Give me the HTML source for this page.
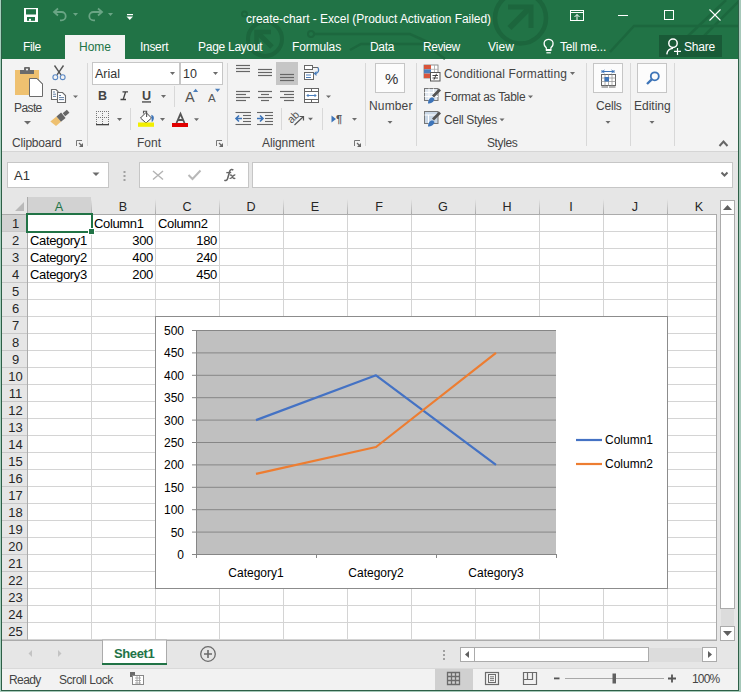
<!DOCTYPE html>
<html><head><meta charset="utf-8"><style>
*{box-sizing:border-box}
html,body{margin:0;padding:0}
body{width:741px;height:692px;position:relative;overflow:hidden;background:#217346;font-family:"Liberation Sans",sans-serif;}
.a{position:absolute}
.t{position:absolute;white-space:nowrap;line-height:1}
svg{position:absolute;overflow:visible}
</style></head><body>
<div class="a" style="left:0px;top:0px;width:741px;height:59px;background:#217346"></div>
<div class="a" style="left:2px;top:59px;width:736px;height:92px;background:#f3f3f3"></div>
<div class="a" style="left:2px;top:151px;width:736px;height:1px;background:#d5d5d5"></div>
<div class="a" style="left:2px;top:152px;width:736px;height:45px;background:#e6e6e6"></div>
<div class="a" style="left:2px;top:197px;width:736px;height:443px;background:#e6e6e6"></div>
<div class="a" style="left:2px;top:640px;width:736px;height:28px;background:#e6e6e6"></div>
<div class="a" style="left:2px;top:668px;width:736px;height:1px;background:#d9d9d9"></div>
<div class="a" style="left:2px;top:669px;width:736px;height:21px;background:#f2f2f2"></div>
<svg style="left:0;top:0" width="741" height="59"><circle cx="520.5" cy="18" r="25.5" fill="none" stroke="#1c663d" stroke-width="4.5"/><path d="M509.5 28 L530 7.5" fill="none" stroke="#1c663d" stroke-width="5.5"/><path d="M508 7 H531 V28" fill="none" stroke="#1c663d" stroke-width="5"/><circle cx="311" cy="34" r="3" fill="none" stroke="#1c663d" stroke-width="2"/><circle cx="265" cy="39" r="17" fill="none" stroke="#1c663d" stroke-width="4"/><path d="M257.5 32.5 L272 47" stroke="#1c663d" stroke-width="5"/><path d="M271 32 H256.5 V46" fill="none" stroke="#1c663d" stroke-width="4.5"/><circle cx="244.5" cy="14" r="2.5" fill="none" stroke="#1c663d" stroke-width="2"/><path d="M610 52 L634 26 H741 M688 36 L726 0 M704 36 L741 -1 M314 34 H410 L450 52 M350 50 L361 44 H425 L445 59" fill="none" stroke="#1c663d" stroke-width="2.5" opacity="0.9"/><path d="M24 8 H38 V22 H24 Z" fill="#fff"/><rect x="26" y="9.2" width="10" height="5.3" fill="#217346"/><rect x="27" y="17" width="8" height="3.8" fill="#217346"/><rect x="29" y="18.8" width="2" height="2" fill="#fff"/><path d="M58 8.5 L54 12 L58 15.5 M54.5 12 H61.5 A4.2 4.2 0 0 1 61.5 20.4 H60" fill="none" stroke="#6aa585" stroke-width="1.8"/><path d="M73 13 H78 L75.5 16 Z" fill="#6aa585"/><path d="M98 8.5 L102 12 L98 15.5 M101.5 12 H93.5 A4.2 4.2 0 0 0 93.5 20.4 H95" fill="none" stroke="#6aa585" stroke-width="1.8"/><path d="M108 13 H113 L110.5 16 Z" fill="#6aa585"/><rect x="127" y="14" width="6" height="1.2" fill="#fff"/><path d="M126.5 16.5 H133 L129.75 20 Z" fill="#fff"/><rect x="570.5" y="10.5" width="13" height="10" fill="none" stroke="#fff" stroke-width="1"/><line x1="570.5" y1="12.5" x2="583.5" y2="12.5" stroke="#fff" stroke-width="1"/><path d="M577 20.5 V14.5 M574.5 17 L577 14.5 L579.5 17" fill="none" stroke="#fff" stroke-width="1"/><line x1="618" y1="15.5" x2="628" y2="15.5" stroke="#fff" stroke-width="1"/><rect x="664.5" y="10.5" width="9" height="9" fill="none" stroke="#fff" stroke-width="1"/><path d="M709.5 9.5 L720.5 20.5 M720.5 9.5 L709.5 20.5" stroke="#fff" stroke-width="1.1"/><rect x="659" y="35" width="63" height="22" fill="#195a37"/><circle cx="673" cy="43.3" r="4.2" fill="none" stroke="#fff" stroke-width="1.5"/><path d="M666.8 54.3 C667.2 50.8 669.5 48.6 673 48.4" fill="none" stroke="#fff" stroke-width="1.4"/><path d="M674 51.4 H681 M677.5 48 V55" stroke="#fff" stroke-width="1.2"/><path d="M546.3 47.8 C544.2 46 543.9 44 544.2 42.5 C544.8 40.2 546.5 39.3 548.6 39.3 C550.7 39.3 552.4 40.2 553 42.5 C553.3 44 553 46 550.9 47.8 V50.2 H546.3 Z" fill="none" stroke="#fff" stroke-width="1.2"/><rect x="546" y="49" width="5.2" height="2" fill="#fff"/><path d="M546.4 52.8 H550.8" stroke="#fff" stroke-width="1.2"/><rect x="65" y="35" width="60" height="24" fill="#f3f3f3"/></svg>
<div class="t" style="left:246px;top:13px;font-size:12px;color:#fff;letter-spacing:-0.05px">create-chart - Excel (Product Activation Failed)</div>
<div class="t" style="left:23px;top:41px;font-size:12px;color:#fff;letter-spacing:-0.4px">File</div>
<div class="t" style="left:79px;top:41px;font-size:12px;color:#217346">Home</div>
<div class="t" style="left:140px;top:41px;font-size:12px;color:#fff;letter-spacing:-0.3px">Insert</div>
<div class="t" style="left:198px;top:41px;font-size:12px;color:#fff;letter-spacing:-0.27px">Page Layout</div>
<div class="t" style="left:292px;top:41px;font-size:12px;color:#fff;letter-spacing:-0.12px">Formulas</div>
<div class="t" style="left:370px;top:41px;font-size:12px;color:#fff;letter-spacing:-0.3px">Data</div>
<div class="t" style="left:423px;top:41px;font-size:12px;color:#fff;letter-spacing:-0.45px">Review</div>
<div class="t" style="left:488px;top:41px;font-size:12px;color:#fff">View</div>
<div class="t" style="left:560px;top:41px;font-size:12px;color:#fff;letter-spacing:-0.2px">Tell me...</div>
<div class="t" style="left:684px;top:41px;font-size:12px;color:#fff;letter-spacing:-0.2px">Share</div>
<svg style="left:0;top:0" width="741" height="160"><rect x="87" y="63" width="1" height="83" fill="#d8d8d8"/><rect x="227" y="63" width="1" height="83" fill="#d8d8d8"/><rect x="365" y="63" width="1" height="83" fill="#d8d8d8"/><rect x="416" y="63" width="1" height="83" fill="#d8d8d8"/><rect x="586" y="63" width="1" height="83" fill="#d8d8d8"/><rect x="630" y="63" width="1" height="83" fill="#d8d8d8"/><rect x="674" y="63" width="1" height="83" fill="#d8d8d8"/><rect x="15" y="70" width="24" height="25" fill="#efc170"/><rect x="20" y="70" width="14" height="4" fill="#6b6b6b"/><rect x="24" y="67" width="6" height="4" rx="1" fill="#6b6b6b"/><circle cx="27" cy="69.5" r="1" fill="#fff"/><path d="M29.5 78.5 H37 L42.5 84 V96.5 H29.5 Z" fill="#fff" stroke="#6b6b6b" stroke-width="1"/><path d="M37 78.5 L42.5 84" stroke="#6b6b6b" stroke-width="1"/><path d="M24 121 H31 L27.5 124.5 Z" fill="#6b6b6b"/><path d="M54.5 65.5 L61 74.8 M63.5 65.5 L57 74.8" stroke="#555" stroke-width="1.4"/><circle cx="55.3" cy="77.2" r="2.4" fill="none" stroke="#5a88c4" stroke-width="1.1"/><circle cx="62.7" cy="77.2" r="2.4" fill="none" stroke="#5a88c4" stroke-width="1.1"/><path d="M51.5 89.5 H56 L58 91.5 V99.5 H51.5 Z" fill="#fff" stroke="#6b6b6b" stroke-width="1.1"/><path d="M53 92 H55 M53 94.2 H56 M53 96.4 H56" stroke="#4f6f98" stroke-width="0.9"/><path d="M57.5 92.5 H62.5 L65.5 95.5 V102.5 H57.5 Z" fill="#fff" stroke="#6b6b6b" stroke-width="1.1"/><path d="M59 95.5 H61 M59 97.6 H64 M59 99.6 H64" stroke="#4f6f98" stroke-width="0.9"/><path d="M73 95.5 H78 L75.5 98 Z" fill="#6b6b6b"/><g transform="translate(59.5 118.5) rotate(-40)"><path d="M-9 -3.5 H-1 V3.5 H-7.5 Z" fill="#eec070"/><rect x="-1" y="-3.5" width="6" height="7" fill="#666"/><rect x="5.8" y="-2" width="5.5" height="4" fill="#666"/></g><rect x="92.5" y="62.5" width="87" height="22" fill="#fff" stroke="#c6c6c6"/><rect x="180.5" y="62.5" width="42" height="22" fill="#fff" stroke="#c6c6c6"/><path d="M170 72 H175 L172.5 75 Z" fill="#6b6b6b"/><path d="M213 72 H218 L215.5 75 Z" fill="#6b6b6b"/><path d="M161 95 H166 L163.5 98 Z" fill="#6b6b6b"/><rect x="142" y="101.3" width="9" height="1.3" fill="#444"/><rect x="174" y="86" width="1" height="21" fill="#d8d8d8"/><path d="M193 92 L195.6 88.8 L198.2 92 Z" fill="#4a7ebb"/><path d="M215 88.8 H220.2 L217.6 92 Z" fill="#4a7ebb"/><g fill="#777"><rect x="96" y="111" width="1" height="1"/><rect x="98" y="111" width="1" height="1"/><rect x="100" y="111" width="1" height="1"/><rect x="102" y="111" width="1" height="1"/><rect x="104" y="111" width="1" height="1"/><rect x="106" y="111" width="1" height="1"/><rect x="108" y="111" width="1" height="1"/><rect x="96" y="117" width="1" height="1"/><rect x="98" y="117" width="1" height="1"/><rect x="100" y="117" width="1" height="1"/><rect x="102" y="117" width="1" height="1"/><rect x="104" y="117" width="1" height="1"/><rect x="106" y="117" width="1" height="1"/><rect x="108" y="117" width="1" height="1"/><rect x="96" y="111" width="1" height="1"/><rect x="96" y="113" width="1" height="1"/><rect x="96" y="115" width="1" height="1"/><rect x="96" y="117" width="1" height="1"/><rect x="96" y="119" width="1" height="1"/><rect x="96" y="121" width="1" height="1"/><rect x="96" y="123" width="1" height="1"/><rect x="102" y="111" width="1" height="1"/><rect x="102" y="113" width="1" height="1"/><rect x="102" y="115" width="1" height="1"/><rect x="102" y="117" width="1" height="1"/><rect x="102" y="119" width="1" height="1"/><rect x="102" y="121" width="1" height="1"/><rect x="102" y="123" width="1" height="1"/><rect x="108" y="111" width="1" height="1"/><rect x="108" y="113" width="1" height="1"/><rect x="108" y="115" width="1" height="1"/><rect x="108" y="117" width="1" height="1"/><rect x="108" y="119" width="1" height="1"/><rect x="108" y="121" width="1" height="1"/><rect x="108" y="123" width="1" height="1"/></g><rect x="96" y="124" width="13" height="1.3" fill="#444"/><path d="M117 118 H122 L119.5 121 Z" fill="#6b6b6b"/><rect x="130" y="108" width="1" height="22" fill="#d8d8d8"/><path d="M140.5 118 L146 112.5 L151.5 118 L146 123 Z" fill="#fff" stroke="#444" stroke-width="1"/><path d="M143.5 113.5 V111.2 H146.6 V117" fill="none" stroke="#555" stroke-width="1.1"/><path d="M151.3 114.8 C154.2 115.6 155 119 151.8 122.3 Z" fill="#3d74b8"/><rect x="138" y="122.5" width="16" height="4.3" fill="#f2ef00"/><path d="M160 118 H165 L162.5 121 Z" fill="#6b6b6b"/><path d="M176.5 123 L180.5 113.8 L184.5 123 M178 120 H183" fill="none" stroke="#555" stroke-width="1.8"/><rect x="172" y="123" width="16" height="4" fill="#e00000"/><path d="M194 118.2 H199 L196.5 121 Z" fill="#6b6b6b"/><path d="M216.5 146 V140.5 H222" fill="none" stroke="#777" stroke-width="1"/><path d="M223 143 V147 H219 Z" fill="#666"/><path d="M219 143 L222 146" stroke="#666" stroke-width="1.2"/><line x1="236" y1="65.5" x2="250" y2="65.5" stroke="#666" stroke-width="1.2"/><line x1="236" y1="68.5" x2="250" y2="68.5" stroke="#666" stroke-width="1.2"/><line x1="236" y1="71.5" x2="250" y2="71.5" stroke="#666" stroke-width="1.2"/><line x1="258" y1="69.5" x2="272" y2="69.5" stroke="#666" stroke-width="1.2"/><line x1="258" y1="72.5" x2="272" y2="72.5" stroke="#666" stroke-width="1.2"/><line x1="258" y1="75.5" x2="272" y2="75.5" stroke="#666" stroke-width="1.2"/><rect x="276" y="62" width="22" height="23" fill="#c6c6c6"/><line x1="280" y1="74.5" x2="294" y2="74.5" stroke="#666" stroke-width="1.2"/><line x1="280" y1="77.5" x2="294" y2="77.5" stroke="#666" stroke-width="1.2"/><line x1="280" y1="80.5" x2="294" y2="80.5" stroke="#666" stroke-width="1.2"/><rect x="304.5" y="65.5" width="8" height="4" fill="#fff" stroke="#666"/><line x1="312.5" y1="67.5" x2="318" y2="67.5" stroke="#666" stroke-width="1"/><rect x="304.5" y="72.5" width="9" height="7" fill="#fff" stroke="#666"/><line x1="306" y1="75" x2="311" y2="75" stroke="#4a7ebb" stroke-width="1"/><line x1="306" y1="77.5" x2="311" y2="77.5" stroke="#4a7ebb" stroke-width="1"/><path d="M318 67.5 C319.5 71 318 73.5 315 73.5" fill="none" stroke="#4a7ebb" stroke-width="1.3"/><path d="M313.5 73.5 L316.5 71 L316.5 76 Z" fill="#4a7ebb"/><line x1="236" y1="91.5" x2="250" y2="91.5" stroke="#666" stroke-width="1.2"/><line x1="258" y1="91.5" x2="272" y2="91.5" stroke="#666" stroke-width="1.2"/><line x1="280" y1="91.5" x2="294" y2="91.5" stroke="#666" stroke-width="1.2"/><line x1="236" y1="94.5" x2="246" y2="94.5" stroke="#666" stroke-width="1.2"/><line x1="261" y1="94.5" x2="269" y2="94.5" stroke="#666" stroke-width="1.2"/><line x1="284" y1="94.5" x2="294" y2="94.5" stroke="#666" stroke-width="1.2"/><line x1="236" y1="97.5" x2="250" y2="97.5" stroke="#666" stroke-width="1.2"/><line x1="258" y1="97.5" x2="272" y2="97.5" stroke="#666" stroke-width="1.2"/><line x1="280" y1="97.5" x2="294" y2="97.5" stroke="#666" stroke-width="1.2"/><line x1="236" y1="100.5" x2="246" y2="100.5" stroke="#666" stroke-width="1.2"/><line x1="261" y1="100.5" x2="269" y2="100.5" stroke="#666" stroke-width="1.2"/><line x1="284" y1="100.5" x2="294" y2="100.5" stroke="#666" stroke-width="1.2"/><rect x="304.5" y="88.5" width="14" height="14" fill="#fff" stroke="#666"/><line x1="304.5" y1="91.5" x2="318.5" y2="91.5" stroke="#666" stroke-width="1"/><line x1="304.5" y1="99.5" x2="318.5" y2="99.5" stroke="#666" stroke-width="1"/><line x1="311.5" y1="88.5" x2="311.5" y2="91.5" stroke="#666"/><line x1="311.5" y1="99.5" x2="311.5" y2="102.5" stroke="#666"/><path d="M307 95.5 H316 M308.5 94 L307 95.5 L308.5 97 M314.5 94 L316 95.5 L314.5 97" fill="none" stroke="#4a7ebb" stroke-width="1"/><path d="M326 95.5 H331 L328.5 98 Z" fill="#6b6b6b"/><line x1="235.5" y1="112.5" x2="251" y2="112.5" stroke="#666" stroke-width="1.1"/><line x1="257" y1="112.5" x2="273" y2="112.5" stroke="#666" stroke-width="1.1"/><line x1="243" y1="115.5" x2="251" y2="115.5" stroke="#666" stroke-width="1.1"/><line x1="265" y1="115.5" x2="273" y2="115.5" stroke="#666" stroke-width="1.1"/><line x1="243" y1="118.5" x2="251" y2="118.5" stroke="#666" stroke-width="1.1"/><line x1="265" y1="118.5" x2="273" y2="118.5" stroke="#666" stroke-width="1.1"/><line x1="243" y1="121.5" x2="251" y2="121.5" stroke="#666" stroke-width="1.1"/><line x1="265" y1="121.5" x2="273" y2="121.5" stroke="#666" stroke-width="1.1"/><line x1="235.5" y1="124.5" x2="251" y2="124.5" stroke="#666" stroke-width="1.1"/><line x1="257" y1="124.5" x2="273" y2="124.5" stroke="#666" stroke-width="1.1"/><path d="M236 118.5 H242 M239 115.5 L236 118.5 L239 121.5" fill="none" stroke="#3d74b8" stroke-width="1.6"/><path d="M257 118.5 H263 M260 115.5 L263 118.5 L260 121.5" fill="none" stroke="#3d74b8" stroke-width="1.6"/><rect x="281" y="108" width="1" height="22" fill="#d8d8d8"/><rect x="322" y="108" width="1" height="22" fill="#d8d8d8"/><text x="0" y="0" transform="translate(291.5,124) rotate(-45)" font-family="Liberation Sans" font-size="11" fill="#555">ab</text><path d="M294.5 125 L303.5 116.5 M299.5 116.5 H303.5 V120.5" fill="none" stroke="#555" stroke-width="1.2"/><path d="M308 117.8 H313 L310.5 120.5 Z" fill="#6b6b6b"/><path d="M331.5 115.5 L336 119 L331.5 122.5 Z" fill="#3d74b8"/><text x="336" y="123" font-family="Liberation Sans" font-size="11" font-weight="bold" fill="#555">&#182;</text><path d="M352 118 H357 L354.5 120.7 Z" fill="#6b6b6b"/><path d="M354.5 146 V140.5 H360" fill="none" stroke="#777" stroke-width="1"/><path d="M361 143 V147 H357 Z" fill="#666"/><path d="M357 143 L360 146" stroke="#666" stroke-width="1.2"/><path d="M76.5 146 V140.5 H82" fill="none" stroke="#777" stroke-width="1"/><path d="M83 143 V147 H79 Z" fill="#666"/><path d="M79 143 L82 146" stroke="#666" stroke-width="1.2"/><rect x="375.5" y="63.5" width="29" height="29" fill="#fcfcfc" stroke="#c6c6c6"/><path d="M387.5 121 H392.5 L390 123.7 Z" fill="#6b6b6b"/><rect x="424" y="65" width="14" height="13" fill="#fff" stroke="#777" stroke-width="0.8"/><rect x="424" y="65" width="7" height="4.3" fill="#d9553a"/><rect x="424" y="69.3" width="7" height="4.3" fill="#4a7ebb"/><rect x="424" y="73.6" width="7" height="4.4" fill="#d9553a"/><path d="M431 69.3 H438 M431 73.6 H438 M434.5 65 V78" stroke="#aaa" stroke-width="0.8"/><rect x="430.5" y="72.5" width="9.5" height="8.5" fill="#fff" stroke="#555" stroke-width="1"/><path d="M432.5 75.5 H438 M432.5 78 H438 M436.5 73.8 L434 79.7" stroke="#333" stroke-width="0.9"/><rect x="424.5" y="88.5" width="13.5" height="12" fill="#dfe6ee" stroke="#777" stroke-width="1"/><path d="M424.5 92.5 H438 M424.5 96.5 H438 M429 88.5 V100.5 M433.5 88.5 V100.5" stroke="#fff" stroke-width="1"/><path d="M433 96.5 L440 89.5" stroke="#555" stroke-width="2.8"/><path d="M428 103.5 C428 99.5 430 97.0 433 97.5 L434.5 99.0 C433.5 102.5 431 103.5 428 103.5 Z" fill="#3d74b8"/><rect x="424.5" y="111.5" width="13.5" height="12" fill="#c9d7e6" stroke="#777" stroke-width="1"/><path d="M424.5 115.0 H438 M428.5 115.0 V123.5" stroke="#fff" stroke-width="1"/><path d="M433 119.5 L440 112.5" stroke="#555" stroke-width="2.8"/><path d="M428 126.5 C428 122.5 430 120.0 433 120.5 L434.5 122.0 C433.5 125.5 431 126.5 428 126.5 Z" fill="#3d74b8"/><path d="M570 72 H575 L572.5 75 Z" fill="#6b6b6b"/><path d="M528 95.5 H533 L530.5 98.3 Z" fill="#6b6b6b"/><path d="M499.5 118.5 H504.5 L502 121.3 Z" fill="#6b6b6b"/><rect x="593.5" y="63.5" width="29" height="29" fill="#fcfcfc" stroke="#c6c6c6"/><rect x="601.5" y="74.5" width="14" height="11" fill="#fff" stroke="#666" stroke-width="1"/><path d="M601.5 78 H615.5 M601.5 81.5 H615.5 M605 74.5 V85.5 M608.5 74.5 V85.5 M612 74.5 V85.5" stroke="#999" stroke-width="0.8"/><rect x="604.5" y="77" width="4.5" height="4.5" fill="#3d74b8"/><path d="M602 71.5 H614 M602 70 V73 M614 70 V73 M604.5 70 L602.5 71.5 L604.5 73 M611.5 70 L613.5 71.5 L611.5 73" fill="none" stroke="#3d74b8" stroke-width="1"/><path d="M601.5 87 H608 M609 87 H615.5" stroke="#666" stroke-width="1"/><path d="M605.5 121 H610.5 L608 123.7 Z" fill="#6b6b6b"/><rect x="637.5" y="63.5" width="29" height="29" fill="#fcfcfc" stroke="#c6c6c6"/><circle cx="654.8" cy="76.3" r="4" fill="none" stroke="#3d74b8" stroke-width="1.8"/><path d="M651.8 79.3 L647 84" stroke="#3d74b8" stroke-width="2.4"/><path d="M649.5 121 H654.5 L652 123.7 Z" fill="#6b6b6b"/><path d="M719.5 146 L723.5 141.5 L727.5 146" fill="none" stroke="#666" stroke-width="2"/></svg>
<div class="t" style="left:14px;top:102px;font-size:12px;color:#444;letter-spacing:-0.6px">Paste</div>
<div class="t" style="left:12px;top:137px;font-size:12px;color:#444;letter-spacing:-0.2px">Clipboard</div>
<div class="t" style="left:137px;top:137px;font-size:12px;color:#444">Font</div>
<div class="t" style="left:262px;top:137px;font-size:12px;color:#444;letter-spacing:-0.1px">Alignment</div>
<div class="t" style="left:487px;top:137px;font-size:12px;color:#444;letter-spacing:-0.4px">Styles</div>
<div class="t" style="left:369px;top:100px;font-size:12px;color:#444;letter-spacing:0.15px">Number</div>
<div class="t" style="left:596px;top:100px;font-size:12px;color:#444;letter-spacing:-0.2px">Cells</div>
<div class="t" style="left:634px;top:100px;font-size:12px;color:#444">Editing</div>
<div class="t" style="left:385px;top:71px;font-size:15px;color:#333">%</div>
<div class="t" style="left:444px;top:68px;font-size:12px;color:#444;letter-spacing:0.1px">Conditional Formatting</div>
<div class="t" style="left:444px;top:91px;font-size:12px;color:#444;letter-spacing:-0.3px">Format as Table</div>
<div class="t" style="left:444px;top:114px;font-size:12px;color:#444;letter-spacing:-0.35px">Cell Styles</div>
<div class="t" style="left:95px;top:68px;font-size:12.5px;color:#333">Arial</div>
<div class="t" style="left:183px;top:68px;font-size:12.5px;color:#333">10</div>
<div class="t" style="left:98px;top:90px;font-size:12.5px;font-weight:bold;color:#444">B</div>
<svg style="left:0;top:0" width="300" height="150"><path d="M122.5 91.8 H128 M120.5 99.5 H126 M125.6 91.8 L123.2 99.5" fill="none" stroke="#444" stroke-width="1.3"/></svg>
<div class="t" style="left:142px;top:90px;font-size:12.5px;font-weight:bold;color:#444">U</div>
<div class="t" style="left:185px;top:89.5px;font-size:14.5px;color:#555">A</div>
<div class="t" style="left:208px;top:92.5px;font-size:11.5px;color:#555">A</div>
<div class="a" style="left:28px;top:215px;width:688px;height:425px;background:#fff"></div>
<div class="a" style="left:2px;top:197px;width:714px;height:17px;background:#e6e6e6"></div>
<div class="a" style="left:2px;top:214px;width:25px;height:426px;background:#e6e6e6"></div>
<div class="a" style="left:91px;top:215px;width:1px;height:425px;background:#d4d4d4"></div>
<div class="a" style="left:155px;top:215px;width:1px;height:425px;background:#d4d4d4"></div>
<div class="a" style="left:219px;top:215px;width:1px;height:425px;background:#d4d4d4"></div>
<div class="a" style="left:283px;top:215px;width:1px;height:425px;background:#d4d4d4"></div>
<div class="a" style="left:347px;top:215px;width:1px;height:425px;background:#d4d4d4"></div>
<div class="a" style="left:411px;top:215px;width:1px;height:425px;background:#d4d4d4"></div>
<div class="a" style="left:475px;top:215px;width:1px;height:425px;background:#d4d4d4"></div>
<div class="a" style="left:539px;top:215px;width:1px;height:425px;background:#d4d4d4"></div>
<div class="a" style="left:603px;top:215px;width:1px;height:425px;background:#d4d4d4"></div>
<div class="a" style="left:667px;top:215px;width:1px;height:425px;background:#d4d4d4"></div>
<div class="a" style="left:28px;top:231px;width:688px;height:1px;background:#d4d4d4"></div>
<div class="a" style="left:28px;top:248px;width:688px;height:1px;background:#d4d4d4"></div>
<div class="a" style="left:28px;top:265px;width:688px;height:1px;background:#d4d4d4"></div>
<div class="a" style="left:28px;top:282px;width:688px;height:1px;background:#d4d4d4"></div>
<div class="a" style="left:28px;top:299px;width:688px;height:1px;background:#d4d4d4"></div>
<div class="a" style="left:28px;top:316px;width:688px;height:1px;background:#d4d4d4"></div>
<div class="a" style="left:28px;top:333px;width:688px;height:1px;background:#d4d4d4"></div>
<div class="a" style="left:28px;top:350px;width:688px;height:1px;background:#d4d4d4"></div>
<div class="a" style="left:28px;top:367px;width:688px;height:1px;background:#d4d4d4"></div>
<div class="a" style="left:28px;top:384px;width:688px;height:1px;background:#d4d4d4"></div>
<div class="a" style="left:28px;top:401px;width:688px;height:1px;background:#d4d4d4"></div>
<div class="a" style="left:28px;top:418px;width:688px;height:1px;background:#d4d4d4"></div>
<div class="a" style="left:28px;top:435px;width:688px;height:1px;background:#d4d4d4"></div>
<div class="a" style="left:28px;top:452px;width:688px;height:1px;background:#d4d4d4"></div>
<div class="a" style="left:28px;top:469px;width:688px;height:1px;background:#d4d4d4"></div>
<div class="a" style="left:28px;top:486px;width:688px;height:1px;background:#d4d4d4"></div>
<div class="a" style="left:28px;top:503px;width:688px;height:1px;background:#d4d4d4"></div>
<div class="a" style="left:28px;top:520px;width:688px;height:1px;background:#d4d4d4"></div>
<div class="a" style="left:28px;top:537px;width:688px;height:1px;background:#d4d4d4"></div>
<div class="a" style="left:28px;top:554px;width:688px;height:1px;background:#d4d4d4"></div>
<div class="a" style="left:28px;top:571px;width:688px;height:1px;background:#d4d4d4"></div>
<div class="a" style="left:28px;top:588px;width:688px;height:1px;background:#d4d4d4"></div>
<div class="a" style="left:28px;top:605px;width:688px;height:1px;background:#d4d4d4"></div>
<div class="a" style="left:28px;top:622px;width:688px;height:1px;background:#d4d4d4"></div>
<div class="a" style="left:28px;top:639px;width:688px;height:1px;background:#d4d4d4"></div>
<div class="a" style="left:2px;top:214px;width:714px;height:1px;background:#ababab"></div>
<div class="a" style="left:27px;top:197px;width:1px;height:443px;background:#ababab"></div>
<div class="a" style="left:91px;top:199px;width:1px;height:15px;background:linear-gradient(#e6e6e6,#ababab)"></div>
<div class="a" style="left:155px;top:199px;width:1px;height:15px;background:linear-gradient(#e6e6e6,#ababab)"></div>
<div class="a" style="left:219px;top:199px;width:1px;height:15px;background:linear-gradient(#e6e6e6,#ababab)"></div>
<div class="a" style="left:283px;top:199px;width:1px;height:15px;background:linear-gradient(#e6e6e6,#ababab)"></div>
<div class="a" style="left:347px;top:199px;width:1px;height:15px;background:linear-gradient(#e6e6e6,#ababab)"></div>
<div class="a" style="left:411px;top:199px;width:1px;height:15px;background:linear-gradient(#e6e6e6,#ababab)"></div>
<div class="a" style="left:475px;top:199px;width:1px;height:15px;background:linear-gradient(#e6e6e6,#ababab)"></div>
<div class="a" style="left:539px;top:199px;width:1px;height:15px;background:linear-gradient(#e6e6e6,#ababab)"></div>
<div class="a" style="left:603px;top:199px;width:1px;height:15px;background:linear-gradient(#e6e6e6,#ababab)"></div>
<div class="a" style="left:667px;top:199px;width:1px;height:15px;background:linear-gradient(#e6e6e6,#ababab)"></div>
<div class="a" style="left:2px;top:231px;width:25px;height:1px;background:#c8c8c8"></div>
<div class="a" style="left:2px;top:248px;width:25px;height:1px;background:#c8c8c8"></div>
<div class="a" style="left:2px;top:265px;width:25px;height:1px;background:#c8c8c8"></div>
<div class="a" style="left:2px;top:282px;width:25px;height:1px;background:#c8c8c8"></div>
<div class="a" style="left:2px;top:299px;width:25px;height:1px;background:#c8c8c8"></div>
<div class="a" style="left:2px;top:316px;width:25px;height:1px;background:#c8c8c8"></div>
<div class="a" style="left:2px;top:333px;width:25px;height:1px;background:#c8c8c8"></div>
<div class="a" style="left:2px;top:350px;width:25px;height:1px;background:#c8c8c8"></div>
<div class="a" style="left:2px;top:367px;width:25px;height:1px;background:#c8c8c8"></div>
<div class="a" style="left:2px;top:384px;width:25px;height:1px;background:#c8c8c8"></div>
<div class="a" style="left:2px;top:401px;width:25px;height:1px;background:#c8c8c8"></div>
<div class="a" style="left:2px;top:418px;width:25px;height:1px;background:#c8c8c8"></div>
<div class="a" style="left:2px;top:435px;width:25px;height:1px;background:#c8c8c8"></div>
<div class="a" style="left:2px;top:452px;width:25px;height:1px;background:#c8c8c8"></div>
<div class="a" style="left:2px;top:469px;width:25px;height:1px;background:#c8c8c8"></div>
<div class="a" style="left:2px;top:486px;width:25px;height:1px;background:#c8c8c8"></div>
<div class="a" style="left:2px;top:503px;width:25px;height:1px;background:#c8c8c8"></div>
<div class="a" style="left:2px;top:520px;width:25px;height:1px;background:#c8c8c8"></div>
<div class="a" style="left:2px;top:537px;width:25px;height:1px;background:#c8c8c8"></div>
<div class="a" style="left:2px;top:554px;width:25px;height:1px;background:#c8c8c8"></div>
<div class="a" style="left:2px;top:571px;width:25px;height:1px;background:#c8c8c8"></div>
<div class="a" style="left:2px;top:588px;width:25px;height:1px;background:#c8c8c8"></div>
<div class="a" style="left:2px;top:605px;width:25px;height:1px;background:#c8c8c8"></div>
<div class="a" style="left:2px;top:622px;width:25px;height:1px;background:#c8c8c8"></div>
<div class="a" style="left:2px;top:639px;width:25px;height:1px;background:#c8c8c8"></div>
<div class="a" style="left:28px;top:197px;width:63px;height:17px;background:#d2d2d2"></div>
<div class="a" style="left:2px;top:215px;width:25px;height:16px;background:#d2d2d2"></div>
<svg style="left:0;top:0" width="40" height="220"><path d="M24 202 L24 211 L15 211 Z" fill="#b9b9b9"/></svg>
<div class="t" style="left:39.0px;width:40px;text-align:center;top:201px;font-size:12.6px;color:#217346">A</div>
<div class="t" style="left:103.0px;width:40px;text-align:center;top:201px;font-size:12.6px;color:#262626">B</div>
<div class="t" style="left:167.0px;width:40px;text-align:center;top:201px;font-size:12.6px;color:#262626">C</div>
<div class="t" style="left:231.0px;width:40px;text-align:center;top:201px;font-size:12.6px;color:#262626">D</div>
<div class="t" style="left:295.0px;width:40px;text-align:center;top:201px;font-size:12.6px;color:#262626">E</div>
<div class="t" style="left:359.0px;width:40px;text-align:center;top:201px;font-size:12.6px;color:#262626">F</div>
<div class="t" style="left:423.0px;width:40px;text-align:center;top:201px;font-size:12.6px;color:#262626">G</div>
<div class="t" style="left:487.0px;width:40px;text-align:center;top:201px;font-size:12.6px;color:#262626">H</div>
<div class="t" style="left:551.0px;width:40px;text-align:center;top:201px;font-size:12.6px;color:#262626">I</div>
<div class="t" style="left:615.0px;width:40px;text-align:center;top:201px;font-size:12.6px;color:#262626">J</div>
<div class="t" style="left:679.0px;width:40px;text-align:center;top:201px;font-size:12.6px;color:#262626">K</div>
<div class="t" style="left:3.5px;width:24px;text-align:center;top:217px;font-size:13px;color:#262626">1</div>
<div class="t" style="left:3.5px;width:24px;text-align:center;top:234px;font-size:13px;color:#262626">2</div>
<div class="t" style="left:3.5px;width:24px;text-align:center;top:251px;font-size:13px;color:#262626">3</div>
<div class="t" style="left:3.5px;width:24px;text-align:center;top:268px;font-size:13px;color:#262626">4</div>
<div class="t" style="left:3.5px;width:24px;text-align:center;top:285px;font-size:13px;color:#262626">5</div>
<div class="t" style="left:3.5px;width:24px;text-align:center;top:302px;font-size:13px;color:#262626">6</div>
<div class="t" style="left:3.5px;width:24px;text-align:center;top:319px;font-size:13px;color:#262626">7</div>
<div class="t" style="left:3.5px;width:24px;text-align:center;top:336px;font-size:13px;color:#262626">8</div>
<div class="t" style="left:3.5px;width:24px;text-align:center;top:353px;font-size:13px;color:#262626">9</div>
<div class="t" style="left:3.5px;width:24px;text-align:center;top:370px;font-size:13px;color:#262626">10</div>
<div class="t" style="left:3.5px;width:24px;text-align:center;top:387px;font-size:13px;color:#262626">11</div>
<div class="t" style="left:3.5px;width:24px;text-align:center;top:404px;font-size:13px;color:#262626">12</div>
<div class="t" style="left:3.5px;width:24px;text-align:center;top:421px;font-size:13px;color:#262626">13</div>
<div class="t" style="left:3.5px;width:24px;text-align:center;top:438px;font-size:13px;color:#262626">14</div>
<div class="t" style="left:3.5px;width:24px;text-align:center;top:455px;font-size:13px;color:#262626">15</div>
<div class="t" style="left:3.5px;width:24px;text-align:center;top:472px;font-size:13px;color:#262626">16</div>
<div class="t" style="left:3.5px;width:24px;text-align:center;top:489px;font-size:13px;color:#262626">17</div>
<div class="t" style="left:3.5px;width:24px;text-align:center;top:506px;font-size:13px;color:#262626">18</div>
<div class="t" style="left:3.5px;width:24px;text-align:center;top:523px;font-size:13px;color:#262626">19</div>
<div class="t" style="left:3.5px;width:24px;text-align:center;top:540px;font-size:13px;color:#262626">20</div>
<div class="t" style="left:3.5px;width:24px;text-align:center;top:557px;font-size:13px;color:#262626">21</div>
<div class="t" style="left:3.5px;width:24px;text-align:center;top:574px;font-size:13px;color:#262626">22</div>
<div class="t" style="left:3.5px;width:24px;text-align:center;top:591px;font-size:13px;color:#262626">23</div>
<div class="t" style="left:3.5px;width:24px;text-align:center;top:608px;font-size:13px;color:#262626">24</div>
<div class="t" style="left:3.5px;width:24px;text-align:center;top:625px;font-size:13px;color:#262626">25</div>
<div class="t" style="left:94px;top:217px;font-size:13px;letter-spacing:-0.35px;color:#000">Column1</div>
<div class="t" style="left:158px;top:217px;font-size:13px;letter-spacing:-0.35px;color:#000">Column2</div>
<div class="t" style="left:30px;top:234px;font-size:13px;letter-spacing:-0.35px;color:#000">Category1</div>
<div class="t" style="left:93px;width:60px;text-align:right;top:234px;font-size:13px;letter-spacing:-0.35px;color:#000">300</div>
<div class="t" style="left:157px;width:60px;text-align:right;top:234px;font-size:13px;letter-spacing:-0.35px;color:#000">180</div>
<div class="t" style="left:30px;top:251px;font-size:13px;letter-spacing:-0.35px;color:#000">Category2</div>
<div class="t" style="left:93px;width:60px;text-align:right;top:251px;font-size:13px;letter-spacing:-0.35px;color:#000">400</div>
<div class="t" style="left:157px;width:60px;text-align:right;top:251px;font-size:13px;letter-spacing:-0.35px;color:#000">240</div>
<div class="t" style="left:30px;top:268px;font-size:13px;letter-spacing:-0.35px;color:#000">Category3</div>
<div class="t" style="left:93px;width:60px;text-align:right;top:268px;font-size:13px;letter-spacing:-0.35px;color:#000">200</div>
<div class="t" style="left:157px;width:60px;text-align:right;top:268px;font-size:13px;letter-spacing:-0.35px;color:#000">450</div>
<div class="a" style="left:26px;top:213px;width:67px;height:2px;background:#217346"></div>
<div class="a" style="left:26px;top:213px;width:2px;height:20px;background:#217346"></div>
<div class="a" style="left:91px;top:213px;width:2px;height:15px;background:#217346"></div>
<div class="a" style="left:26px;top:231px;width:62px;height:2px;background:#217346"></div>
<div class="a" style="left:88px;top:228px;width:7px;height:7px;background:#fff"></div>
<div class="a" style="left:89px;top:229px;width:5px;height:5px;background:#217346"></div>
<div class="a" style="left:716px;top:197px;width:22px;height:443px;background:#e6e6e6"></div>
<div class="a" style="left:720px;top:200px;width:15px;height:15px;background:#fff;border:1px solid #ababab"></div>
<svg style="left:723px;top:205px" width="9" height="5"><path d="M0 5 L4.5 0 L9 5 Z" fill="#606060"/></svg>
<div class="a" style="left:720px;top:214px;width:15px;height:412px;background:#dcdcdc;border-left:1px solid #e6e6e6;border-right:1px solid #e6e6e6"></div>
<div class="a" style="left:720px;top:214px;width:15px;height:395px;background:#fff;border:1px solid #ababab"></div>
<div class="a" style="left:716px;top:214px;width:1px;height:427px;background:#ababab"></div>
<div class="a" style="left:720px;top:626px;width:15px;height:15px;background:#fff;border:1px solid #ababab"></div>
<svg style="left:723px;top:631px" width="9" height="5"><path d="M0 0 L4.5 5 L9 0 Z" fill="#606060"/></svg>
<svg style="left:0;top:0" width="741" height="692"><rect x="7.5" y="162.5" width="101" height="25" fill="#fff" stroke="#c6c6c6"/><path d="M92.5 172.5 H99.5 L96 176 Z" fill="#6b6b6b"/><rect x="123.5" y="171" width="2" height="2" fill="#a0a0a0"/><rect x="123.5" y="175" width="2" height="2" fill="#a0a0a0"/><rect x="123.5" y="179" width="2" height="2" fill="#a0a0a0"/><rect x="139.5" y="162.5" width="109" height="25" fill="#fff" stroke="#c6c6c6"/><path d="M153 171 L163 179.5 M163 171 L153 179.5" stroke="#b3b3b3" stroke-width="1.4"/><path d="M188.5 175 L192.5 179 L200.5 170.5" fill="none" stroke="#b8b8b8" stroke-width="2"/><rect x="252.5" y="162.5" width="480" height="25" fill="#fff" stroke="#c6c6c6"/><path d="M721.5 172.5 L724.5 175.5 L727.5 172.5" fill="none" stroke="#666" stroke-width="2"/><rect x="443" y="650" width="2" height="2" fill="#a0a0a0"/><rect x="443" y="654" width="2" height="2" fill="#a0a0a0"/><rect x="443" y="658" width="2" height="2" fill="#a0a0a0"/><rect x="460" y="648" width="257" height="14" fill="#dcdcdc"/><rect x="460.5" y="647.5" width="14" height="14" fill="#fff" stroke="#ababab"/><path d="M469 651 L465 654.5 L469 658 Z" fill="#606060"/><rect x="474.5" y="647.5" width="174" height="14" fill="#fff" stroke="#ababab"/><rect x="702.5" y="647.5" width="14" height="14" fill="#fff" stroke="#ababab"/><path d="M708 651 L712 654.5 L708 658 Z" fill="#606060"/><rect x="2" y="640" width="714" height="1" fill="#ababab"/><rect x="102.5" y="640" width="64" height="24" fill="#fff" stroke="#ababab"/><rect x="102" y="663" width="65" height="2" fill="#217346"/><path d="M32 650 L28.5 653.5 L32 657 Z" fill="#c3c3c3"/><path d="M58 650 L61.5 653.5 L58 657 Z" fill="#c3c3c3"/><circle cx="208" cy="654" r="7.3" fill="none" stroke="#6b6b6b" stroke-width="1.3"/><path d="M204 654 H212 M208 650 V658" stroke="#6b6b6b" stroke-width="1.6"/><rect x="435" y="669" width="38" height="21" fill="#d0d0d0"/><path d="M447.5 672.5 H459.5 V684.5 H447.5 Z M451.5 672.5 V684.5 M455.5 672.5 V684.5 M447.5 676.5 H459.5 M447.5 680.5 H459.5" fill="none" stroke="#6b6b6b" stroke-width="1.3"/><rect x="485.5" y="672.5" width="13" height="12" fill="none" stroke="#6b6b6b" stroke-width="1.2"/><rect x="488.5" y="674.5" width="7" height="8" fill="none" stroke="#6b6b6b" stroke-width="1"/><path d="M490 676.8 H494 M490 678.6 H494 M490 680.4 H494" stroke="#6b6b6b" stroke-width="0.9"/><path d="M523.5 672.5 H536.5 V684.5 H523.5 Z M523.5 679.5 H532.5 V672.5 M527.5 672.5 V679.5" fill="none" stroke="#6b6b6b" stroke-width="1.2"/><rect x="554" y="677.5" width="5.5" height="1.8" fill="#555"/><rect x="565" y="678" width="99" height="1" fill="#a8a8a8"/><rect x="612.5" y="673.5" width="3.5" height="10" fill="#606060"/><path d="M668 678.5 H676 M672 674.5 V682.5" stroke="#555" stroke-width="1.8"/><rect x="130" y="672" width="5" height="5" fill="#6b6b6b"/><rect x="132.5" y="675.5" width="11" height="9" fill="#fff" stroke="#888" stroke-width="1"/><path d="M135 678 H141 M135 680.5 H141 M135 683 H141 M137 676 V684 M139.5 676 V684" stroke="#999" stroke-width="0.8"/></svg>
<div class="t" style="left:14px;top:169px;font-size:13px;color:#333">A1</div>
<svg style="left:0;top:0" width="300" height="200"><path d="M233.2 170.2 C232.3 169 230.4 169.2 229.8 171 L227.6 178.6 C227.1 180.4 225.6 180.9 224.4 180.1" fill="none" stroke="#666" stroke-width="1.6"/><path d="M226.3 172.6 H231.2" stroke="#666" stroke-width="1.3"/><path d="M229.8 175.3 C231.3 174.4 232 175.6 232.6 177 C233.2 178.6 234.2 178.8 235.3 178.1 M235.3 175.1 C234.2 174.6 233.5 175.4 232.6 176.6 C231.8 177.8 230.8 178.9 229.6 178.3" fill="none" stroke="#666" stroke-width="1.3"/></svg>
<div class="t" style="left:114px;top:647px;font-size:13px;font-weight:bold;color:#217346;letter-spacing:-0.4px">Sheet1</div>
<div class="t" style="left:9px;top:674px;font-size:12px;color:#444;letter-spacing:-0.6px">Ready</div>
<div class="t" style="left:59px;top:674px;font-size:12px;color:#444;letter-spacing:-0.45px">Scroll Lock</div>
<div class="t" style="left:692px;top:673px;font-size:12px;color:#444;letter-spacing:-0.8px">100%</div>
<div class="a" style="left:155px;top:316px;width:513px;height:273px;background:#fff;border:1px solid #8c8c8c"></div>
<div class="a" style="left:196px;top:330px;width:360px;height:225px;background:#c0c0c0"></div>
<svg style="left:0;top:0" width="741" height="692"><line x1="192" y1="330.5" x2="556" y2="330.5" stroke="#868686" stroke-width="1"/><line x1="192" y1="352.9" x2="556" y2="352.9" stroke="#868686" stroke-width="1"/><line x1="192" y1="375.3" x2="556" y2="375.3" stroke="#868686" stroke-width="1"/><line x1="192" y1="397.7" x2="556" y2="397.7" stroke="#868686" stroke-width="1"/><line x1="192" y1="420.1" x2="556" y2="420.1" stroke="#868686" stroke-width="1"/><line x1="192" y1="442.5" x2="556" y2="442.5" stroke="#868686" stroke-width="1"/><line x1="192" y1="464.9" x2="556" y2="464.9" stroke="#868686" stroke-width="1"/><line x1="192" y1="487.3" x2="556" y2="487.3" stroke="#868686" stroke-width="1"/><line x1="192" y1="509.7" x2="556" y2="509.7" stroke="#868686" stroke-width="1"/><line x1="192" y1="532.1" x2="556" y2="532.1" stroke="#868686" stroke-width="1"/><line x1="192" y1="554.5" x2="556" y2="554.5" stroke="#868686" stroke-width="1"/><line x1="196.5" y1="330" x2="196.5" y2="554" stroke="#868686" stroke-width="1"/><line x1="196.5" y1="554" x2="196.5" y2="558" stroke="#868686" stroke-width="1"/><line x1="316.5" y1="554" x2="316.5" y2="558" stroke="#868686" stroke-width="1"/><line x1="436.5" y1="554" x2="436.5" y2="558" stroke="#868686" stroke-width="1"/><line x1="556.5" y1="554" x2="556.5" y2="558" stroke="#868686" stroke-width="1"/><polyline points="256,420.1 376,375.3 496,464.9" fill="none" stroke="#4472c4" stroke-width="2.2" stroke-linejoin="round"/><polyline points="256,473.9 376,447.0 496,352.9" fill="none" stroke="#ed7d31" stroke-width="2.2" stroke-linejoin="round"/><line x1="576" y1="440" x2="602" y2="440" stroke="#4472c4" stroke-width="2.2"/><line x1="576" y1="464" x2="602" y2="464" stroke="#ed7d31" stroke-width="2.2"/></svg>
<div class="t" style="left:144px;width:40px;text-align:right;top:325.0px;font-size:12px;color:#000">500</div>
<div class="t" style="left:144px;width:40px;text-align:right;top:347.4px;font-size:12px;color:#000">450</div>
<div class="t" style="left:144px;width:40px;text-align:right;top:369.8px;font-size:12px;color:#000">400</div>
<div class="t" style="left:144px;width:40px;text-align:right;top:392.2px;font-size:12px;color:#000">350</div>
<div class="t" style="left:144px;width:40px;text-align:right;top:414.6px;font-size:12px;color:#000">300</div>
<div class="t" style="left:144px;width:40px;text-align:right;top:437.0px;font-size:12px;color:#000">250</div>
<div class="t" style="left:144px;width:40px;text-align:right;top:459.4px;font-size:12px;color:#000">200</div>
<div class="t" style="left:144px;width:40px;text-align:right;top:481.8px;font-size:12px;color:#000">150</div>
<div class="t" style="left:144px;width:40px;text-align:right;top:504.2px;font-size:12px;color:#000">100</div>
<div class="t" style="left:144px;width:40px;text-align:right;top:526.6px;font-size:12px;color:#000">50</div>
<div class="t" style="left:144px;width:40px;text-align:right;top:549.0px;font-size:12px;color:#000">0</div>
<div class="t" style="left:216px;width:80px;text-align:center;top:567px;font-size:12px;color:#000">Category1</div>
<div class="t" style="left:336px;width:80px;text-align:center;top:567px;font-size:12px;color:#000">Category2</div>
<div class="t" style="left:456px;width:80px;text-align:center;top:567px;font-size:12px;color:#000">Category3</div>
<div class="t" style="left:605px;top:434px;font-size:12px;color:#000">Column1</div>
<div class="t" style="left:605px;top:458px;font-size:12px;color:#000">Column2</div>
<div class="a" style="left:0px;top:0px;width:1px;height:692px;background:#a6cfbd"></div>
<div class="a" style="left:1px;top:0px;width:1px;height:691px;background:#2d5f47"></div>
<div class="a" style="left:739px;top:0px;width:2px;height:692px;background:#a6c8b9"></div>
<div class="a" style="left:738px;top:0px;width:1px;height:691px;background:#2d5f47"></div>
<div class="a" style="left:0px;top:691px;width:741px;height:1px;background:#a6c8b9"></div>
<div class="a" style="left:1px;top:690px;width:738px;height:1px;background:#2d5f47"></div>
</body></html>
